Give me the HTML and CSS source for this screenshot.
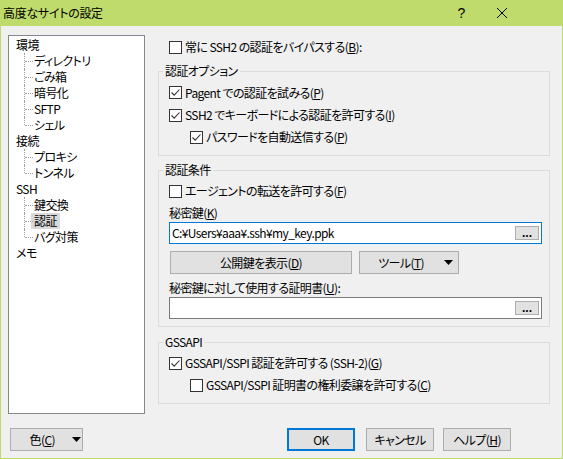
FILE: index.html
```html
<!DOCTYPE html>
<html lang="ja">
<head>
<meta charset="utf-8">
<title>高度なサイトの設定</title>
<link rel="stylesheet" href="styles.css">
</head>
<body>
<div class="window">
  <div class="titlebar">
    <span class="title">高度なサイトの設定</span>
    <span class="help">?</span>
    <svg class="close" viewBox="0 0 12 12" width="12" height="12"><path d="M1 1 L11 11 M11 1 L1 11" stroke="#000" stroke-width="1" fill="none"/></svg>
  </div>
  <div class="main">
    <ul class="tree">
      <li class="node">環境
        <ul>
          <li>ディレクトリ</li>
          <li>ごみ箱</li>
          <li>暗号化</li>
          <li>SFTP</li>
          <li class="last">シェル</li>
        </ul>
      </li>
      <li class="node">接続
        <ul>
          <li>プロキシ</li>
          <li class="last">トンネル</li>
        </ul>
      </li>
      <li class="node">SSH
        <ul>
          <li>鍵交換</li>
          <li><span class="sel">認証</span></li>
          <li class="last">バグ対策</li>
        </ul>
      </li>
      <li class="node">メモ</li>
    </ul>
    <div class="pane">
      <label class="check top"><span class="cb"></span><span>常に SSH2 の認証をバイパスする(<u>B</u>):</span></label>
      <fieldset class="group g1">
        <legend>認証オプション</legend>
        <div class="gbody">
          <label class="check r23"><span class="cb on"><svg viewBox="0 0 11 11"><path d="M1.5 5.5 L4.2 8.2 L9.5 2.5"/></svg></span><span>Pagent での認証を試みる(<u>P</u>)</span></label>
          <label class="check"><span class="cb on"><svg viewBox="0 0 11 11"><path d="M1.5 5.5 L4.2 8.2 L9.5 2.5"/></svg></span><span>SSH2 でキーボードによる認証を許可する(<u>I</u>)</span></label>
          <label class="check indent"><span class="cb on"><svg viewBox="0 0 11 11"><path d="M1.5 5.5 L4.2 8.2 L9.5 2.5"/></svg></span><span>パスワードを自動送信する(<u>P</u>)</span></label>
        </div>
      </fieldset>
      <fieldset class="group g2">
        <legend>認証条件</legend>
        <div class="gbody">
          <label class="check"><span class="cb"></span><span>エージェントの転送を許可する(<u>F</u>)</span></label>
          <div class="flabel l1">秘密鍵(<u>K</u>)</div>
          <div class="input focus"><span class="val">C:¥Users¥aaa¥.ssh¥my_key.ppk</span><span class="dots">...</span></div>
          <div class="btnrow">
            <span class="btn wide">公開鍵を表示(<u>D</u>)</span>
            <span class="btn tool"><span class="tlabel">ツール(<u>T</u>)</span><svg class="tri" viewBox="0 0 9 5" width="9" height="5"><path d="M0 0 H9 L4.5 5 Z" fill="#000"/></svg></span>
          </div>
          <div class="flabel l2">秘密鍵に対して使用する証明書(<u>U</u>):</div>
          <div class="input"><span class="val"></span><span class="dots">...</span></div>
        </div>
      </fieldset>
      <fieldset class="group g3">
        <legend>GSSAPI</legend>
        <div class="gbody">
          <label class="check"><span class="cb on"><svg viewBox="0 0 11 11"><path d="M1.5 5.5 L4.2 8.2 L9.5 2.5"/></svg></span><span>GSSAPI/SSPI 認証を許可する (SSH-2)(<u>G</u>)</span></label>
          <label class="check indent"><span class="cb"></span><span>GSSAPI/SSPI 証明書の権利委譲を許可する(<u>C</u>)</span></label>
        </div>
      </fieldset>
    </div>
  </div>
  <div class="footer">
    <span class="btn color"><span class="clabel">色(<u>C</u>)</span><svg class="tri" viewBox="0 0 9 5" width="9" height="5"><path d="M0 0 H9 L4.5 5 Z" fill="#000"/></svg></span>
    <span class="btn ok">OK</span>
    <span class="btn cancel">キャンセル</span>
    <span class="btn helpbtn">ヘルプ(<u>H</u>)</span>
  </div>
</div>
</body>
</html>
```
FILE: styles.css
```css
* { box-sizing: border-box; }
html, body { margin: 0; padding: 0; }
body {
  font-family: "Noto Sans CJK JP", "Noto Sans", sans-serif;
  font-size: 12px;
  line-height: 16px;
  color: #000;
  font-feature-settings: "palt";
  letter-spacing: -0.6px;
  background: #f0f0f0;
}
.window {
  width: 563px;
  height: 459px;
  border: 1px solid #bfdb6c;
  border-top: none;
  background: #f0f0f0;
  display: flex;
  flex-direction: column;
}
.titlebar {
  height: 26px;
  background: #bfdb6c;
  display: flex;
  align-items: center;
  padding-left: 3px;
  padding-right: 55px;
  margin: 0 -1px;
}
.title { flex: 1; font-size: 12px; letter-spacing: -0.3px; }
.help { width: 20px; text-align: center; font-size: 14px; font-family: "Liberation Sans", sans-serif; margin-right: 2px; }
.close { margin-left: 23px; }
.main {
  display: flex;
  padding: 9px 0 0 7px;
}
.tree {
  list-style: none;
  margin: 0;
  width: 137px;
  height: 379px;
  border: 1px solid #828790;
  background: #fff;
  padding: 1px 0 0 7px;
}
.tree ul { list-style: none; margin: 0; padding: 0; }
.tree .node > ul > li {
  position: relative;
  height: 16px;
  padding-left: 18px;
}
.tree .node > ul > li::before {
  content: "";
  position: absolute;
  left: 8px;
  top: 0;
  height: 16px;
  border-left: 1px dotted #a0a0a0;
}
.tree .node > ul > li.last::before { height: 8px; }
.tree .node > ul > li::after {
  content: "";
  position: absolute;
  left: 9px;
  top: 8px;
  width: 8px;
  border-top: 1px dotted #a0a0a0;
}
.sel { background: #d9d9d9; margin-left: -3px; padding: 0 3px; display: inline-block; height: 16px; }
.pane {
  margin-left: 13px;
  width: 392px;
  display: flex;
  flex-direction: column;
}
.check {
  display: flex;
  align-items: center;
  gap: 3px;
  height: 22px;
}
.check.top { height: 24px; margin-left: 11px; }
.check.r23 { height: 23px; }
.check.indent { margin-left: 21px; }
.cb {
  width: 13px;
  height: 13px;
  border: 1px solid #333;
  background: #fff;
  flex: none;
  display: flex;
}
.cb svg { width: 11px; height: 11px; }
.cb svg path { stroke: #333; stroke-width: 1.1; fill: none; }
.group {
  margin: 0;
  padding: 0;
  border: 1px solid #dcdcdc;
  min-inline-size: 0;
}
.group legend {
  margin-left: 4px;
  padding: 0 2px;
  line-height: 16px;
}
.g1 { margin-top: 4px; }
.g2 { margin-top: 6px; }
.g3 { margin-top: 7px; }
.gbody { padding: 2px 7px 7px 10px; }
.flabel { height: 16px; }
.l1 { margin-top: 3px; }
.l2 { margin-top: 6px; }
.input {
  margin-top: 1px;
  height: 22px;
  width: 373px;
  border: 1px solid #7a7a7a;
  background: #fff;
  display: flex;
  align-items: center;
}
.input.focus { border-color: #0078d7; }
.val { flex: 1; padding-left: 2px; }
.dots {
  width: 24px;
  height: 14px;
  margin-right: 2px;
  background: #e1e1e1;
  border: 1px solid #adadad;
  font-size: 12px;
  font-weight: bold;
  line-height: 12px;
  letter-spacing: 0;
  text-align: center;
  font-family: "Liberation Sans", sans-serif;
}
.btnrow {
  display: flex;
  gap: 7px;
  margin-top: 7px;
  margin-left: 1px;
}
.btn {
  height: 23px;
  background: #e1e1e1;
  border: 1px solid #adadad;
  display: flex;
  align-items: center;
  justify-content: center;
}
.btn.wide { width: 182px; }
.btn.tool { width: 100px; justify-content: flex-start; }
.tlabel { width: 64px; text-align: right; }
.tool .tri { margin-left: 20px; }
.footer {
  display: flex;
  margin-top: 14px;
  padding: 0 51px 0 9px;
}
.btn.color { width: 73px; justify-content: flex-start; }
.clabel { width: 44px; text-align: right; }
.color .tri { margin-left: 17px; }
.btn.ok { margin-left: auto; width: 68px; border: 2px solid #0078d7; }
.btn.cancel { margin-left: 11px; width: 68px; }
.btn.helpbtn { margin-left: 9px; width: 68px; }
u { text-decoration: underline; text-underline-offset: 1px; }
```
